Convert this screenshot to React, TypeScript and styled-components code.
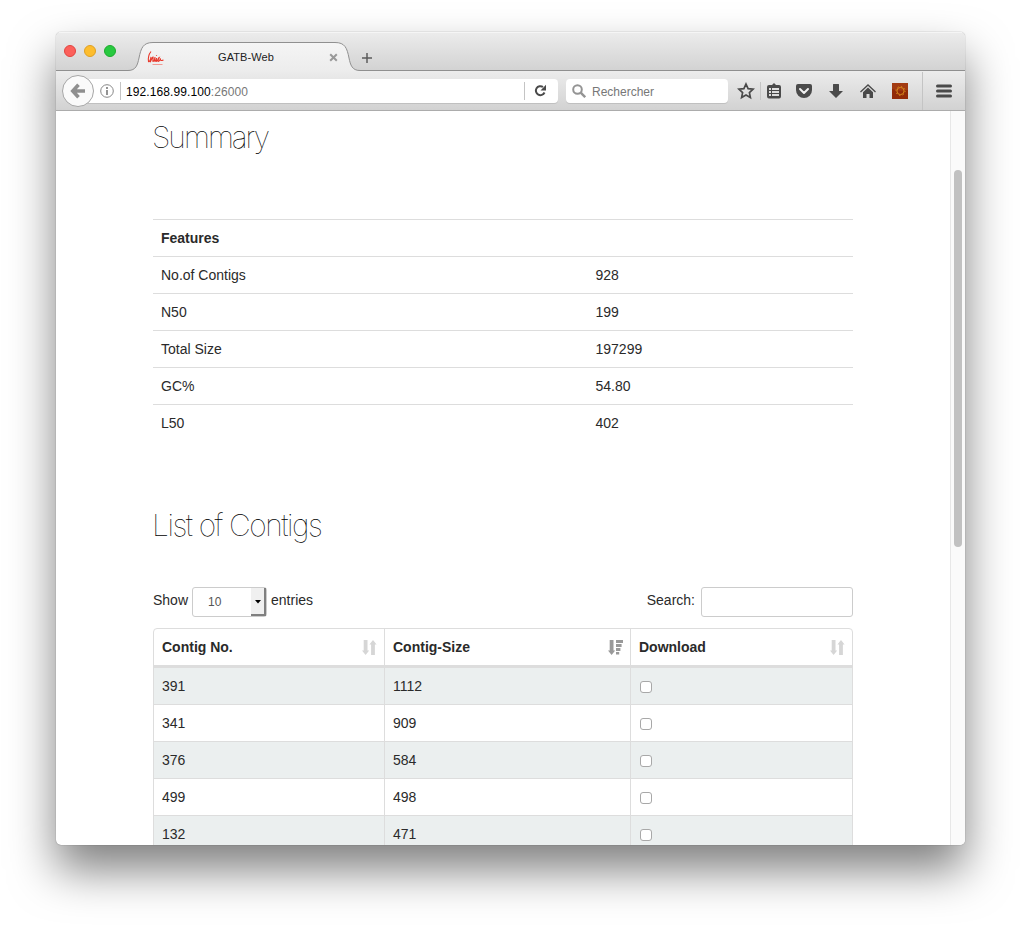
import React from "react";
import styled, { createGlobalStyle } from "styled-components";

const GlobalStyle = createGlobalStyle`
  *, *::before, *::after { box-sizing: border-box; }
  body {
    margin: 0;
    background: #fff;
    color: #2a2a2a;
    font: 14px/20px "Liberation Sans", Arial, sans-serif;
  }
`;

const Desktop = styled.div`
  height: 925px;
  padding: 32px 56px 80px;
  overflow: hidden;
`;

const Window = styled.div`
  display: flex;
  flex-direction: column;
  width: 909px;
  height: 813px;
  border-radius: 5px;
  overflow: hidden;
  background: #fff;
  box-shadow: 0 0 1px rgba(0, 0, 0, 0.55), 0 25px 46px rgba(0, 0, 0, 0.5);
`;

const TabStrip = styled.div`
  display: flex;
  flex: none;
  height: 39px;
  background: linear-gradient(#ececec, #d2d2d2);
  box-shadow: inset 0 1px #f5f5f5, inset 0 -1px #8f8f8f;
`;

const Lights = styled.div`
  display: flex;
  gap: 8px;
  width: 72px;
  padding: 13px 0 0 8px;
`;

const Light = styled.span<{ $fill: string; $edge: string }>`
  width: 12px;
  height: 12px;
  border-radius: 50%;
  background: ${(p) => p.$fill};
  border: 1px solid ${(p) => p.$edge};
`;

const Tab = styled.div`
  display: grid;
  grid-template: 40px / 232px;
  width: 232px;
  height: 40px;
  margin-top: -1px;
  > * { grid-area: 1 / 1; }
`;

const TabLabel = styled.div`
  display: flex;
  align-items: center;
  padding: 13px 0 0 18px;
  font-size: 11px;
  color: #222;
  height: 40px;
`;

const TabTitle = styled.span`
  width: 165px;
  padding-left: 54px;
  line-height: 14px;
  margin-top: -1px;
  letter-spacing: 0.08px;
`;

const NewTab = styled.svg`
  margin: 20px 0 0 1px;
`;

const Toolbar = styled.div`
  display: flex;
  align-items: center;
  flex: none;
  height: 40px;
  padding-left: 6px;
  background: linear-gradient(#ececec, #d2d2d2);
  border-bottom: 1px solid #acacac;
`;

const BackButton = styled.div`
  display: grid;
  place-items: center;
  width: 32px;
  height: 32px;
  border: 1px solid #a6a6a6;
  border-radius: 50%;
  background: #fafafa;
  z-index: 1;
`;

const Field = styled.div`
  display: flex;
  align-items: center;
  height: 24px;
  background: #fff;
  border-radius: 0 4px 4px 0;
  box-shadow: 0 1px #c0c0c0;
  font-size: 12px;
  color: #777;
`;

const AddressField = styled(Field)`
  width: 480px;
  margin-left: -16px;
  padding-left: 22px;
`;

const SearchField = styled(Field)`
  width: 162px;
  margin-left: 8px;
  padding-left: 6px;
  gap: 6px;
  border-radius: 4px;
  span { padding-top: 2px; }
`;

const Rule = styled.span<{ $h: number; $l: number; $r: number }>`
  width: 1px;
  height: ${(p) => p.$h}px;
  margin: 0 ${(p) => p.$r}px 0 ${(p) => p.$l}px;
  background: #c4c4c4;
`;

const Address = styled.span`
  width: 398px;
  padding-top: 2px;
  letter-spacing: 0.1px;
  b { font-weight: 400; color: #000; }
`;

const Tools = styled.div`
  display: flex;
  align-items: center;
  height: 39px;
  padding-left: 9px;
  svg { display: block; }
`;

const Viewport = styled.div`
  display: flex;
  flex: 1;
  min-height: 0;
`;

const Page = styled.main`
  flex: 1;
  padding: 0 97px;
  overflow: hidden;
`;

const Scrollbar = styled.div`
  width: 15px;
  padding: 59px 3px 0;
  background: #fafafa;
  border-left: 1px solid #e7e7e7;
`;

const Thumb = styled.div`
  width: 8px;
  height: 377px;
  border-radius: 4px;
  background: #c1c1c1;
`;

const Heading = styled.h2<{ $top: number; $track: number }>`
  margin: ${(p) => p.$top}px 0 0 -1px;
  font: 100 30px/34px Inter, "Liberation Sans", sans-serif;
  letter-spacing: ${(p) => p.$track}px;
  color: #000;
`;

const Features = styled.div`
  margin-top: 65px;
`;

const FeatureRow = styled.div<{ $head?: boolean }>`
  display: grid;
  grid-template-columns: 434.5px 1fr;
  height: 37px;
  padding: 8px;
  border-top: 1px solid #ddd;
  font-weight: ${(p) => (p.$head ? 700 : 400)};
`;

const Controls = styled.div`
  display: flex;
  align-items: center;
  height: 30px;
  margin-top: 45px;
`;

const ControlText = styled.span`
  margin-top: -4px;
`;

const Select = styled.div`
  display: flex;
  justify-content: space-between;
  width: 75px;
  height: 30px;
  margin: 0 4px 0 4px;
  padding-left: 15px;
  border: 1px solid #ccc;
  border-radius: 3px;
  font-size: 12px;
  line-height: 29px;
  color: #555;
`;

const SelectArrow = styled.span`
  display: grid;
  place-items: center;
  width: 15px;
  padding-top: 1px;
  background: #f0f0f0;
  border: solid #808080;
  border-width: 0 2px 2px 0;
`;

const SearchBox = styled.div`
  width: 152px;
  height: 30px;
  margin-left: 6px;
  border: 1px solid #ccc;
  border-radius: 3px;
`;

const Spacer = styled.span`
  flex: 1;
`;

const Contigs = styled.div`
  margin-top: 11px;
  border: 1px solid #ddd;
  border-radius: 4px 4px 0 0;
`;

const ContigRow = styled.div<{ $odd?: boolean; $head?: boolean }>`
  display: grid;
  grid-template-columns: 231px 246px 1fr;
  height: ${(p) => (p.$head ? 39 : 37)}px;
  border-bottom: ${(p) => (p.$head ? 3 : 1)}px solid #ddd;
  background: ${(p) => (p.$odd ? "#ebefef" : "transparent")};
  font-weight: ${(p) => (p.$head ? 700 : 400)};
`;

const Cell = styled.div`
  display: flex;
  align-items: center;
  justify-content: space-between;
  padding: 0 7px 0 8px;
  border-right: 1px solid #ddd;
  &:last-child { border-right: 0; }
`;

const Checkbox = styled.span`
  width: 12px;
  height: 12px;
  margin: 2px 0 0 1px;
  border: 1px solid #a8a8a8;
  border-radius: 3px;
  background: #fff;
`;

const SortIcon = ({ active }: { active?: boolean }) => (
  <svg width="15" height="15" fill={active ? "#999" : "#d6d6d6"}>
    <path d="M1.700 0h3.800v10.500H7.200L3.600 15 0 10.500h1.700z" />
    {active ? (
      <path d="M8 0h7v3H8zM8 4h5.600v3H8zM8 8h4.400v3H8zM8 12h3.200v2.500H8z" />
    ) : (
      <path d="M11 0l3.600 4.500h-1.700V15H9.100V4.500H7.400z" />
    )}
  </svg>
);

const features = [
  ["No.of Contigs", "928"],
  ["N50", "199"],
  ["Total Size", "197299"],
  ["GC%", "54.80"],
  ["L50", "402"],
];

const contigs = [
  ["391", "1112"],
  ["341", "909"],
  ["376", "584"],
  ["499", "498"],
  ["132", "471"],
];

const BrowserTab = () => (
  <Tab>
    <svg width="232" height="40">
      <defs>
        <linearGradient id="tab" x1="0" y1="0" x2="0" y2="1">
          <stop offset="0" stopColor="#f5f5f5" />
          <stop offset="1" stopColor="#ececec" />
        </linearGradient>
      </defs>
      <path
        d="M0 39.500C8 39.500 9.500 34 11 27C13 17 15 11.500 25 11.500H207C217 11.500 219 17 221 27C222.500 34 224 39.500 232 39.500V41H0z"
        fill="url(#tab)"
      />
      <path
        d="M0 39.500C8 39.500 9.500 34 11 27C13 17 15 11.500 25 11.500H207C217 11.500 219 17 221 27C222.500 34 224 39.500 232 39.500"
        fill="none"
        stroke="#909090"
      />
    </svg>
    <TabLabel>
      <svg width="18" height="18" viewBox="0 0 18 18" fill="none" stroke="#e8382b" strokeWidth="1.100">
        <path d="M5 2.500C3 5 2 9 2.500 12.500c1 1 2-2 2.500-4.500-.5 2-.8 3.500-.5 4.500 1-1.500 1.500-4 2.500-4.500.5 1-.5 3 0 4.500 1 0 1.500-2 2-4.500M9 8c-.3 2-.3 3.500 0 4.500.8 0 1-1.500 1.500-3m0-3.500v.8m0 2.200c-.3 1.500-.2 2.500.2 3.500 1 0 1-3.500 2.500-4-.8 1.500-1.500 3.500-.7 4 1 0 1.500-1.500 2-3-.2 2 0 2.500 3 1.500" />
        <path d="M6.500 15.500h10" stroke="#f09a92" />
      </svg>
      <TabTitle>GATB-Web</TabTitle>
      <svg width="9" height="9" stroke="#999" strokeWidth="2">
        <path d="M1.200 1.200l6.600 6.600M7.800 1.200L1.200 7.800" />
      </svg>
    </TabLabel>
  </Tab>
);

const ToolbarIcons = () => (
  <Tools>
    <svg width="18" height="18" fill="none" stroke="#4a4a4a" strokeWidth="1.700">
      <path d="M9 2l2.100 4.600 5 .6-3.700 3.400 1 5L9 13.100l-4.400 2.500 1-5L1.900 7.200l5-.6z" />
    </svg>
    <Rule $h={18} $l={5} $r={6} />
    <svg width="14" height="16" fill="#4a4a4a">
      <path d="M4.500 2.500L7 0l2.500 2.500z" />
      <path fillRule="evenodd" d="M2 2h10q2 0 2 2v9.500q0 2-2 2H2q-2 0-2-2V4q0-2 2-2zM2 5v2h2V5zM5 5v2h7V5zM2 8v2h2V8zM5 8v2h7V8zM2 11v2h2v-2zM5 11v2h7v-2z" />
    </svg>
    <svg width="47" height="16">
      <path d="M17 1h12q2 0 2 2v4a8 8 0 0 1-16 0V3q0-2 2-2z" fill="#4a4a4a" />
      <path d="M19 6l4 4 4-4" fill="none" stroke="#f0f0f0" strokeWidth="2" strokeLinecap="round" strokeLinejoin="round" />
    </svg>
    <svg width="18" height="16" fill="#4a4a4a">
      <path d="M5 1.500q0-.5.500-.5h5q.5 0 .5.500V8h4L8 15 1 8h4z" />
    </svg>
    <svg width="46" height="16">
      <path d="M14.500 9L22 2l7.500 7" fill="none" stroke="#4a4a4a" strokeWidth="1.300" />
      <path d="M17 9.300l5-4.800 5 4.800V15h-3.500v-4h-3v4H17z" fill="#4a4a4a" />
    </svg>
    <svg width="16" height="16">
      <rect width="16" height="16" fill="#922a08" />
      <path d="M0 0h16v7Q8 9 0 6z" fill="#a33b12" />
      <circle cx="8.500" cy="8" r="3.600" fill="none" stroke="#d98a1c" />
      <circle cx="8.500" cy="8" r="4.600" fill="none" stroke="#d98a1c" strokeDasharray="1.200 2.400" />
    </svg>
    <Rule $h={38} $l={14} $r={13} />
    <svg width="16" height="14" stroke="#4a4a4a" strokeWidth="3" strokeLinecap="round">
      <path d="M1.500 2h13M1.500 7h13M1.500 12h13" />
    </svg>
  </Tools>
);

export default function App() {
  return (
    <>
      <GlobalStyle />
      <Desktop>
        <Window>
          <TabStrip>
            <Lights>
              <Light $fill="#fc605b" $edge="#e2443f" />
              <Light $fill="#fdbd2e" $edge="#dfa023" />
              <Light $fill="#28c940" $edge="#1dab2d" />
            </Lights>
            <BrowserTab />
            <NewTab width="12" height="12" stroke="#5c5c5c" strokeWidth="1.500">
              <path d="M6 1v10M1 6h10" />
            </NewTab>
          </TabStrip>
          <Toolbar>
            <BackButton>
              <svg width="16" height="16" fill="none" stroke="#8f8f8f" strokeWidth="3.600">
                <path d="M8.500 1.800L2.800 8l5.700 6.200M3 8h12" />
              </svg>
            </BackButton>
            <AddressField>
              <svg width="14" height="14" fill="none" stroke="#888">
                <circle cx="7" cy="7" r="6.300" />
                <path d="M7 3v2M7 6v5" strokeWidth="1.800" />
              </svg>
              <Rule $h={18} $l={6} $r={5} />
              <Address><b>192.168.99.100</b>:26000</Address>
              <Rule $h={18} $l={0} $r={9} />
              <svg width="13" height="13">
                <path d="M10.500 8.500A4.500 4.500 0 1 1 9 3" fill="none" stroke="#4a4a4a" strokeWidth="2" />
                <path d="M12 .8v5.700H6.500z" fill="#4a4a4a" />
              </svg>
            </AddressField>
            <SearchField>
              <svg width="14" height="14" fill="none" stroke="#949494" strokeWidth="2">
                <circle cx="5.500" cy="5.500" r="4.300" />
                <path d="M8.700 8.700l4.500 4.500" strokeWidth="2.400" />
              </svg>
              <span>Rechercher</span>
            </SearchField>
            <ToolbarIcons />
          </Toolbar>
          <Viewport>
            <Page>
              <Heading $top={9} $track={-2}>Summary</Heading>
              <Features>
                <FeatureRow $head>Features</FeatureRow>
                {features.map(([name, value]) => (
                  <FeatureRow key={name}>
                    <span>{name}</span>
                    <span>{value}</span>
                  </FeatureRow>
                ))}
              </Features>
              <Heading $top={67} $track={-1.430}>List of Contigs</Heading>
              <Controls>
                <ControlText>Show</ControlText>
                <Select>
                  10
                  <SelectArrow>
                    <svg width="6" height="4"><path d="M0 0h6L3 3.500z" /></svg>
                  </SelectArrow>
                </Select>
                <ControlText>entries</ControlText>
                <Spacer />
                <ControlText>Search:</ControlText>
                <SearchBox />
              </Controls>
              <Contigs>
                <ContigRow $head>
                  <Cell>Contig No.<SortIcon /></Cell>
                  <Cell>Contig-Size<SortIcon active /></Cell>
                  <Cell>Download<SortIcon /></Cell>
                </ContigRow>
                {contigs.map(([no, size], i) => (
                  <ContigRow key={no} $odd={i % 2 === 0}>
                    <Cell>{no}</Cell>
                    <Cell>{size}</Cell>
                    <Cell><Checkbox /></Cell>
                  </ContigRow>
                ))}
              </Contigs>
            </Page>
            <Scrollbar><Thumb /></Scrollbar>
          </Viewport>
        </Window>
      </Desktop>
    </>
  );
}
